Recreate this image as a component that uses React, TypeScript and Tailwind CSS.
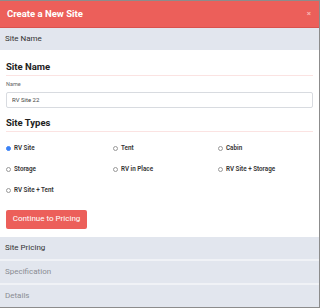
import { useState } from "react";

const siteTypes = [
  "RV Site",
  "Tent",
  "Cabin",
  "Storage",
  "RV in Place",
  "RV Site + Storage",
  "RV Site + Tent",
];

function Bar({ label, active }: { label: string; active?: boolean }) {
  return (
    <div
      className={`flex h-[22px] items-center bg-[#e2e6ee] px-[5px] text-[8px] ${
        active ? "text-[#333]" : "text-[#8a8d93]"
      }`}
    >
      {label}
    </div>
  );
}

export default function App() {
  const [type, setType] = useState("RV Site");
  const [name, setName] = useState("RV Site 22");

  return (
    <div className="h-[308px] w-[320px] bg-[#8c8c8c] pb-px pr-px pt-px font-['Roboto',sans-serif]">
      <div className="flex h-full flex-col bg-white">
        <header className="flex h-[27px] items-center justify-between border-b border-[#d9524e] bg-[#ec5f5a] pl-[7px] pr-[8px]">
          <h1 className="text-[9.5px] font-bold text-white">Create a New Site</h1>
          <button className="text-[8px] font-bold leading-none text-[#f7b3b0]">×</button>
        </header>

        <div className="flex h-[22px] items-center bg-[#e2e6ee] px-[5px] text-[8px] text-[#333]">
          Site Name
        </div>

        <section className="h-[188px] px-[6px] pt-[11px]">
          <h2 className="border-b border-[#fbe3e2] pb-[2px] text-[9.5px] font-bold leading-[12px] text-[#222]">
            Site Name
          </h2>
          <label className="mt-[4px] block text-[5.5px] leading-[8px] text-[#666]">Name</label>
          <input
            value={name}
            onChange={(e) => setName(e.target.value)}
            className="mt-[4px] block h-[16px] w-full rounded-[2px] border border-[#d8dbe0] px-[5px] text-[6px] text-[#444] outline-none"
          />

          <h2 className="mt-[9px] border-b border-[#fbe3e2] pb-[2px] text-[9.5px] font-bold leading-[12px] text-[#222]">
            Site Types
          </h2>
          <div className="mt-[12px] grid grid-cols-[107px_105px_1fr] gap-y-[12px]">
            {siteTypes.map((t) => (
              <label key={t} className="flex h-[9px] items-center gap-[3px] text-[6.3px] font-semibold text-[#333]">
                <span
                  className={`h-[5px] w-[5px] rounded-full border ${
                    type === t ? "border-[#3b82f6] bg-[#3b82f6]" : "border-[#999] bg-white"
                  }`}
                  onClick={() => setType(t)}
                />
                {t}
              </label>
            ))}
          </div>

          <button className="mt-[15px] h-[19px] w-[81px] rounded-[2px] bg-[#ec5f5a] text-[8px] text-white">
            Continue to Pricing
          </button>
        </section>

        <div className="flex flex-1 flex-col gap-[2px] bg-[#f0f2f6]">
          <Bar label="Site Pricing" active />
          <Bar label="Specification" />
          <Bar label="Details" />
        </div>
      </div>
    </div>
  );
}
